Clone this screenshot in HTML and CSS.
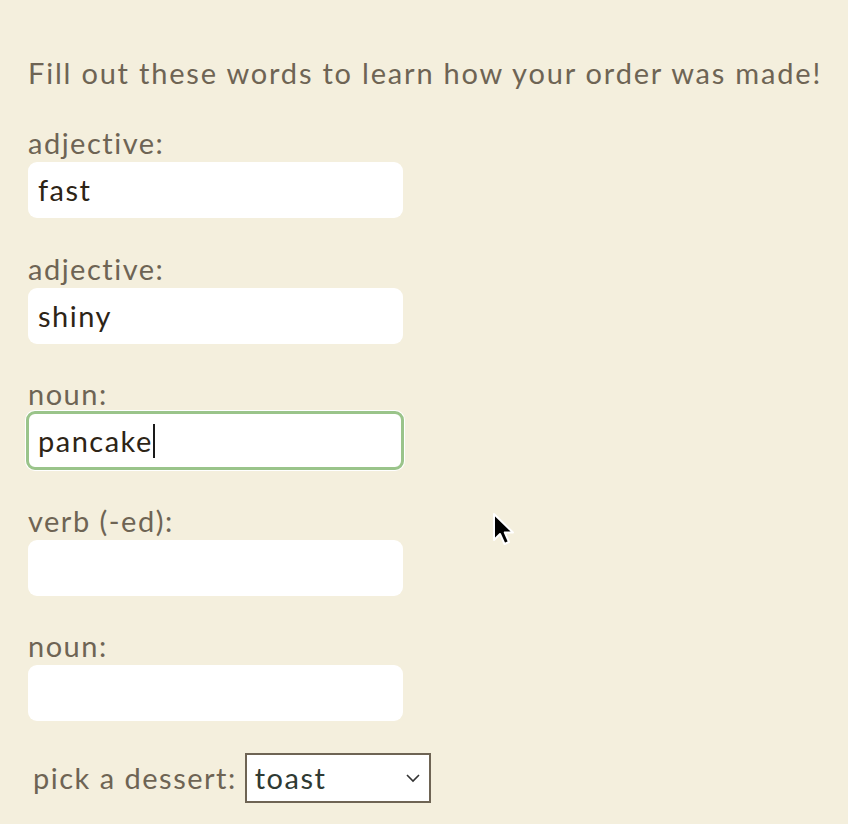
FILE: index.html
```html
<!DOCTYPE html>
<html>
<head>
<meta charset="utf-8">
<link rel="stylesheet" href="styles.css">
</head>
<body>
<main class="page">
  <p class="intro">Fill out these words to learn how your order was made!</p>
  <form class="words">
    <div class="field">
      <label class="label">adjective:</label>
      <div class="input">fast</div>
    </div>
    <div class="field">
      <label class="label">adjective:</label>
      <div class="input">shiny</div>
    </div>
    <div class="field">
      <label class="label">noun:</label>
      <div class="input focused">pancake<span class="caret"></span></div>
    </div>
    <div class="field">
      <label class="label">verb (-ed):</label>
      <div class="input"></div>
    </div>
    <div class="field">
      <label class="label">noun:</label>
      <div class="input"></div>
    </div>
    <div class="dessert">
      <span class="label">pick a dessert:</span>
      <div class="select">
        <span>toast</span>
        <svg class="chev" width="16" height="10" viewBox="0 0 16 10"><path d="M2 2 L8 8 L14 2" fill="none" stroke="#333" stroke-width="1.6"/></svg>
      </div>
    </div>
  </form>
  <svg class="cursor" width="26" height="36" viewBox="0 0 26 36">
    <path d="M2 2 L2 28 L8 22 L12.5 32 L17 30 L12.8 20.5 L21 20.5 Z" fill="#000" stroke="#fff" stroke-width="2" stroke-linejoin="round"/>
  </svg>
</main>
</body>
</html>
```
FILE: styles.css
```css
html, body {
  margin: 0;
  padding: 0;
  background: #f4efdd;
}
.page {
  position: relative;
  width: 848px;
  height: 824px;
  padding: 0 0 0 28px;
  box-sizing: border-box;
  font-family: Lato, "Open Sans", sans-serif;
  color: #6e6454;
  letter-spacing: 1.5px;
}
.intro {
  margin: 0;
  padding-top: 53px;
  font-size: 29px;
  line-height: 40px;
  white-space: nowrap;
  letter-spacing: 1.8px;
}
.words {
  display: flex;
  flex-direction: column;
  margin-top: 34px;
}
.field {
  display: flex;
  flex-direction: column;
  margin-bottom: 34.5px;
}
.field .label {
  line-height: 31px;
  margin-bottom: 4px;
}
.label {
  font-size: 29px;
  line-height: 35px;
}
.input {
  box-sizing: border-box;
  width: 375px;
  height: 56px;
  background: #fff;
  border-radius: 9px;
  padding-left: 10px;
  font-size: 29px;
  line-height: 56px;
  color: #2d2416;
  display: flex;
  align-items: center;
}
.input.focused {
  border: 3px solid #9ac48a;
  height: 59px;
  margin-top: -2px;
  width: 378px;
  margin-left: -2px;
  padding-left: 9px;
  box-shadow: 0 0 0 1px #fff;
}
.caret {
  display: inline-block;
  width: 2px;
  height: 34px;
  background: #1a1a1a;
}
.dessert {
  display: flex;
  align-items: center;
  padding-left: 5px;
  gap: 8px;
  margin-top: -3px;
}
.select {
  box-sizing: border-box;
  width: 186px;
  height: 50px;
  border: 2px solid #6e6454;
  background: #fff;
  display: flex;
  align-items: center;
  justify-content: space-between;
  padding: 0 8px 0 8px;
  font-size: 29px;
  color: #2f3a33;
}
.cursor {
  position: absolute;
  left: 492px;
  top: 512px;
}
```
